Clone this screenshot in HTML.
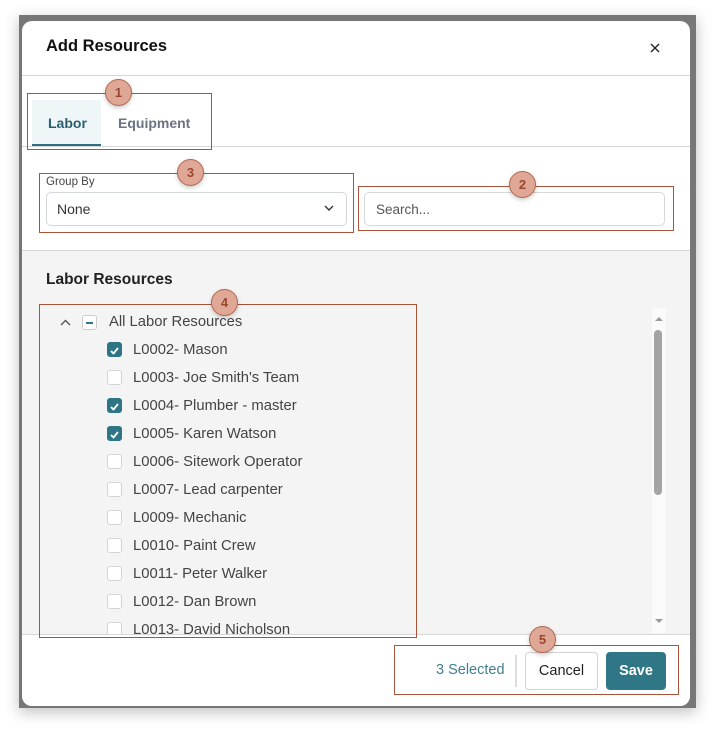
<!DOCTYPE html>
<html><head><style>
*{box-sizing:border-box;margin:0;padding:0}
body{width:715px;height:733px;background:#fff;position:relative;font-family:"Liberation Sans",sans-serif;overflow:hidden}
.abs{position:absolute}
.back{left:19px;top:15px;width:677px;height:693px;background:#777;box-shadow:0 4px 14px rgba(0,0,0,.25)}
.modal{left:22px;top:21px;width:668px;height:685px;background:#fff;border-radius:10px;overflow:hidden}
.hr{position:absolute;left:0;width:668px;height:1px;background:#d6d6d6}
.ann{position:absolute;border:1px solid #a9533a}
.circ{position:absolute;width:27px;height:27px;border-radius:50%;background:#dfa896;border:1px solid #b3674f;color:#9b4630;font-size:13px;font-weight:bold;text-align:center;line-height:25px;box-shadow:0 2px 5px rgba(0,0,0,.2)}
.row{position:absolute;left:85px;height:20px;font-size:14.8px;color:#444;line-height:20px}
.cb{position:absolute;left:0;top:2px;width:15px;height:15px;border:1px solid #d4d4d4;border-radius:3px;background:#fff}
.cb.on{background:#2e7585;border-color:#2e7585}
.row span{position:absolute;left:26px;white-space:nowrap}
</style></head><body>
<div class="abs back"></div>
<div class="abs modal">
  <div class="abs" style="left:24px;top:16px;font-size:16.5px;font-weight:bold;color:#111">Add Resources</div>
  <svg class="abs" style="left:628px;top:22px" width="10" height="10"><path d="M1 1L9 9M9 1L1 9" stroke="#222" stroke-width="1.3"/></svg>
  <div class="hr" style="top:54px"></div>
  <div class="abs" style="left:10px;top:79px;width:69px;height:46px;background:#eef6f8;border-bottom:2px solid #2e6f7f"></div>
  <div class="abs" style="left:26px;top:94px;font-size:14px;font-weight:bold;color:#2a5f70">Labor</div>
  <div class="abs" style="left:96px;top:94px;font-size:14px;font-weight:bold;color:#6b7383">Equipment</div>
  <div class="hr" style="top:125px"></div>
  <div class="abs" style="left:24px;top:155px;font-size:11.5px;color:#444">Group By</div>
  <div class="abs" style="left:24px;top:171px;width:301px;height:34px;border:1px solid #d4d8de;border-radius:5px"></div>
  <div class="abs" style="left:35px;top:180px;font-size:14px;color:#333">None</div>
  <svg class="abs" style="left:302px;top:184px" width="10" height="7"><path d="M1 1L5 5L9 1" stroke="#333" stroke-width="1.4" fill="none"/></svg>
  <div class="abs" style="left:342px;top:171px;width:301px;height:34px;border:1px solid #d8d8d8;border-radius:5px"></div>
  <div class="abs" style="left:354px;top:181px;font-size:13.5px;color:#555">Search...</div>
  <div class="hr" style="top:229px"></div>
  <div class="abs" style="left:0;top:230px;width:668px;height:383px;background:#f4f4f4"></div>
  <div class="abs" style="left:24px;top:250px;font-size:15.5px;font-weight:bold;color:#222">Labor Resources</div>
  <svg class="abs" style="left:38px;top:298px" width="11" height="7"><path d="M1 6L5.5 1.5L10 6" stroke="#555" stroke-width="1.4" fill="none"/></svg>
  <div class="abs" style="left:60px;top:294px;width:15px;height:15px;border:1px solid #ccc;border-radius:3px;background:#fff"><div style="position:absolute;left:3px;top:6px;width:7px;height:2px;background:#2e7585"></div></div>
  <div class="abs" style="left:87px;top:293px;font-size:14.8px;color:#444">All Labor Resources</div>
  <div class="row" style="top:319px"><div class="cb on"><svg width="13" height="13"><path d="M3 7L5.5 9.5L10 4" stroke="#fff" stroke-width="1.8" fill="none"/></svg></div><span>L0002- Mason</span></div>
  <div class="row" style="top:347px"><div class="cb"></div><span>L0003- Joe Smith's Team</span></div>
  <div class="row" style="top:375px"><div class="cb on"><svg width="13" height="13"><path d="M3 7L5.5 9.5L10 4" stroke="#fff" stroke-width="1.8" fill="none"/></svg></div><span>L0004- Plumber - master</span></div>
  <div class="row" style="top:403px"><div class="cb on"><svg width="13" height="13"><path d="M3 7L5.5 9.5L10 4" stroke="#fff" stroke-width="1.8" fill="none"/></svg></div><span>L0005- Karen Watson</span></div>
  <div class="row" style="top:431px"><div class="cb"></div><span>L0006- Sitework Operator</span></div>
  <div class="row" style="top:459px"><div class="cb"></div><span>L0007- Lead carpenter</span></div>
  <div class="row" style="top:487px"><div class="cb"></div><span>L0009- Mechanic</span></div>
  <div class="row" style="top:515px"><div class="cb"></div><span>L0010- Paint Crew</span></div>
  <div class="row" style="top:543px"><div class="cb"></div><span>L0011- Peter Walker</span></div>
  <div class="row" style="top:571px"><div class="cb"></div><span>L0012- Dan Brown</span></div>
  <div class="row" style="top:599px"><div class="cb"></div><span>L0013- David Nicholson</span></div>
  <div class="abs" style="left:630px;top:287px;width:14px;height:325px;background:#fafafa"></div>
  <svg class="abs" style="left:632px;top:295px" width="10" height="6"><path d="M1 5L5 1L9 5Z" fill="#999"/></svg>
  <svg class="abs" style="left:632px;top:597px" width="10" height="6"><path d="M1 1L5 5L9 1Z" fill="#999"/></svg>
  <div class="abs" style="left:632px;top:309px;width:8px;height:165px;border-radius:4px;background:#a4a4a4"></div>
  <div class="abs" style="left:0;top:613px;width:668px;height:72px;background:#fff"></div>
  <div class="hr" style="top:613px"></div>
  <div class="abs" style="left:414px;top:641px;font-size:14.5px;color:#3f7f90">3 Selected</div>
  <div class="abs" style="left:493px;top:634px;width:2px;height:32px;background:#ddd"></div>
  <div class="abs" style="left:503px;top:631px;width:73px;height:38px;border:1px solid #d4d4d4;border-radius:4px;background:#fff;font-size:14.5px;color:#222;text-align:center;line-height:36px">Cancel</div>
  <div class="abs" style="left:584px;top:631px;width:60px;height:38px;border-radius:4px;background:#2f7787;font-size:14.5px;font-weight:bold;color:#fff;text-align:center;line-height:38px">Save</div>
</div>
<div class="ann" style="left:27px;top:93px;width:185px;height:57px"></div>
<div class="ann" style="left:39px;top:173px;width:315px;height:60px"></div>
<div class="ann" style="left:358px;top:186px;width:316px;height:45px"></div>
<div class="ann" style="left:39px;top:304px;width:378px;height:334px"></div>
<div class="ann" style="left:394px;top:645px;width:285px;height:50px"></div>
<div class="circ" style="left:105px;top:79px">1</div>
<div class="circ" style="left:509px;top:171px">2</div>
<div class="circ" style="left:177px;top:159px">3</div>
<div class="circ" style="left:211px;top:289px">4</div>
<div class="circ" style="left:529px;top:626px">5</div>
</body></html>
